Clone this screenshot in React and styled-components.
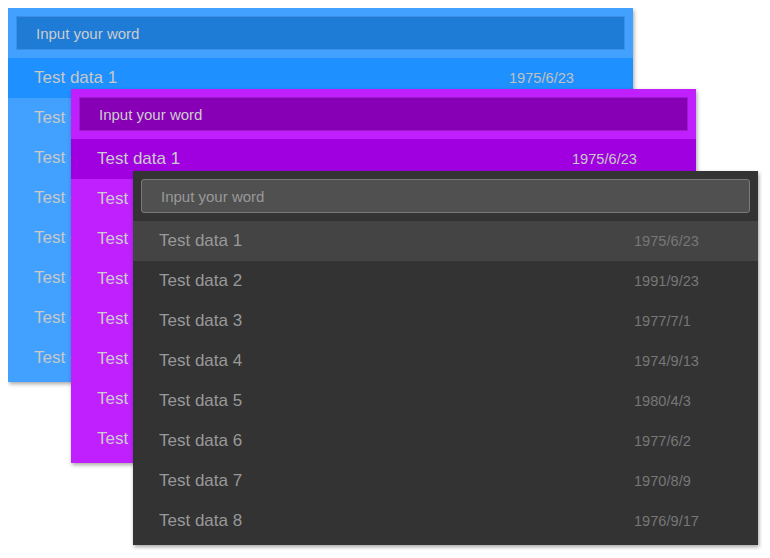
import React from 'react';
import styled, { createGlobalStyle } from 'styled-components';

const GlobalStyle = createGlobalStyle`
  body {
    margin: 8px;
    background: #ffffff;
    font-family: "Liberation Sans", Arial, sans-serif;
  }
`;

const themes = {
  blue: {
    panel: '#42a0fe',
    input: '#1e7bd6',
    inputBorder: '#3a8ee6',
    active: '#1e90ff',
    text: '#c8c8c8',
    date: '#c0c0c0',
    placeholder: '#cccccc',
  },
  purple: {
    panel: '#c020fe',
    input: '#8800b6',
    inputBorder: '#9c1ccc',
    active: '#a000e0',
    text: '#cccccc',
    date: '#c8c8c8',
    placeholder: '#cccccc',
  },
  dark: {
    panel: '#333333',
    input: '#505050',
    inputBorder: '#7a7a7a',
    active: '#444444',
    text: '#999999',
    date: '#777777',
    placeholder: '#999999',
  },
};

// free canvas: the three search windows overlap like windows on a desktop
const Desktop = styled.div`
  position: relative;
  width: 754px;
  height: 542px;
`;

const Panel = styled.div`
  position: absolute;
  left: ${p => p.$x}px;
  top: ${p => p.$y}px;
  display: flex;
  flex-direction: column;
  width: 625px;
  padding-bottom: 4px;
  background: ${p => p.$t.panel};
  box-shadow: 1px 2px 4px rgba(0, 0, 0, 0.35);
`;

const SearchBox = styled.div`
  padding: 8px;
`;

const Input = styled.input`
  box-sizing: border-box;
  display: block;
  width: 100%;
  height: 34px;
  padding: 0 19px;
  border: 1px solid ${p => p.$t.inputBorder};
  border-radius: ${p => (p.$round ? '3px' : '0')};
  background: ${p => p.$t.input};
  color: ${p => p.$t.text};
  font-family: "Liberation Sans", Arial, sans-serif;
  font-size: 15px;
  outline: none;

  &::placeholder {
    color: ${p => p.$t.placeholder};
  }
`;

const List = styled.ul`
  display: flex;
  flex-direction: column;
  list-style: none;
  margin: 0;
  padding: 0;
`;

const Row = styled.li`
  display: grid;
  grid-template-columns: 1fr 100px;
  align-items: center;
  height: 40px;
  padding: 0 24px 0 26px;
  background: ${p => (p.$active ? p.$t.active : 'transparent')};
`;

const Name = styled.span`
  font-size: 17px;
  color: ${p => p.$t.text};
`;

const Date = styled.span`
  font-size: 14.6px;
  color: ${p => p.$t.date};
`;

const data = [
  { name: 'Test data 1', date: '1975/6/23' },
  { name: 'Test data 2', date: '1991/9/23' },
  { name: 'Test data 3', date: '1977/7/1' },
  { name: 'Test data 4', date: '1974/9/13' },
  { name: 'Test data 5', date: '1980/4/3' },
  { name: 'Test data 6', date: '1977/6/2' },
  { name: 'Test data 7', date: '1970/8/9' },
  { name: 'Test data 8', date: '1976/9/17' },
];

function SearchPanel({ t, x, y, round }) {
  return (
    <Panel $t={t} $x={x} $y={y}>
      <SearchBox>
        <Input $t={t} $round={round} placeholder="Input your word" />
      </SearchBox>
      <List>
        {data.map((d, i) => (
          <Row key={d.name} $t={t} $active={i === 0}>
            <Name $t={t}>{d.name}</Name>
            <Date $t={t}>{d.date}</Date>
          </Row>
        ))}
      </List>
    </Panel>
  );
}

export default function App() {
  return (
    <>
      <GlobalStyle />
      <Desktop>
        <SearchPanel t={themes.blue} x={0} y={0} />
        <SearchPanel t={themes.purple} x={63} y={81} />
        <SearchPanel t={themes.dark} x={125} y={163} round />
      </Desktop>
    </>
  );
}
